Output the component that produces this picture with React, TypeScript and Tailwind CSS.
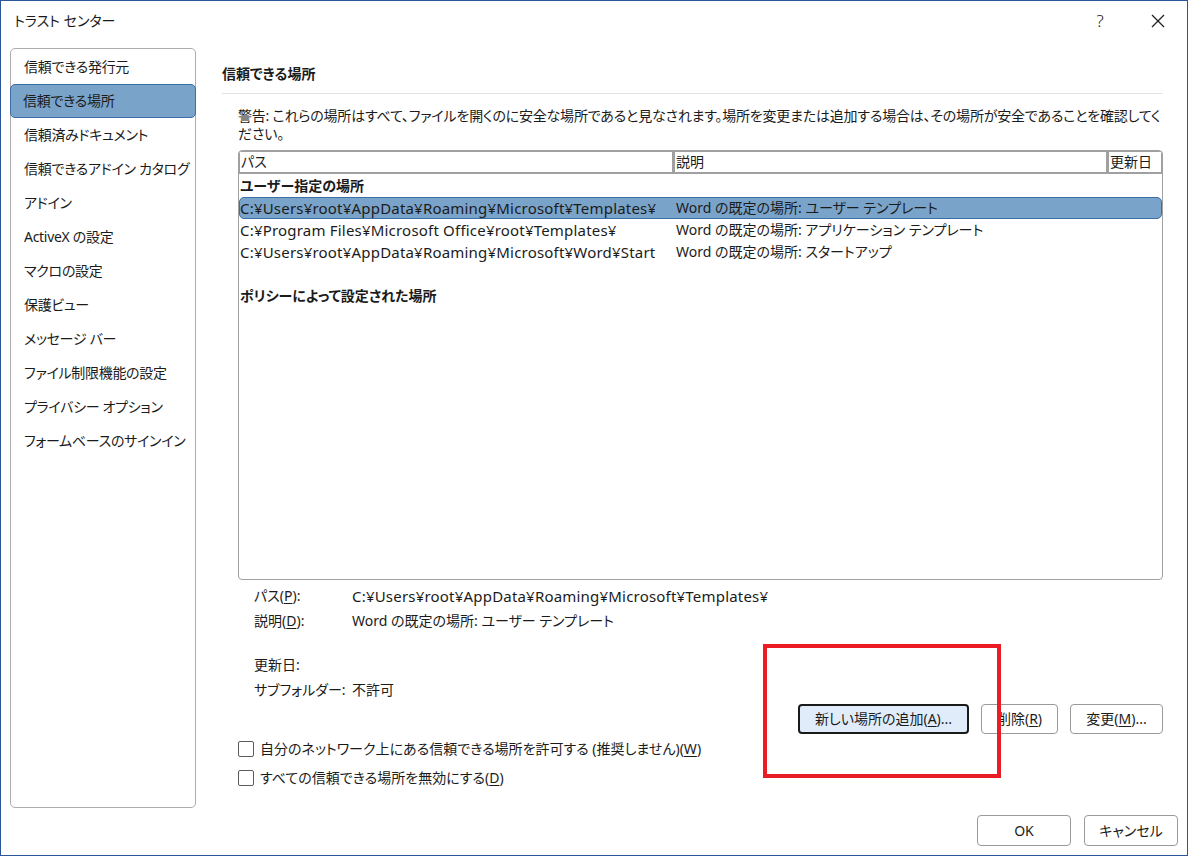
import React from "react";

const navItems = [
  "信頼できる発行元",
  "信頼できる場所",
  "信頼済みドキュメント",
  "信頼できるアドイン カタログ",
  "アドイン",
  "ActiveX の設定",
  "マクロの設定",
  "保護ビュー",
  "メッセージ バー",
  "ファイル制限機能の設定",
  "プライバシー オプション",
  "フォームベースのサインイン",
];

type Row = { kind: "group" | "item" | "blank"; path?: string; desc?: string; selected?: boolean };

const rows: Row[] = [
  { kind: "group", path: "ユーザー指定の場所" },
  {
    kind: "item",
    path: "C:¥Users¥root¥AppData¥Roaming¥Microsoft¥Templates¥",
    desc: "Word の既定の場所: ユーザー テンプレート",
    selected: true,
  },
  {
    kind: "item",
    path: "C:¥Program Files¥Microsoft Office¥root¥Templates¥",
    desc: "Word の既定の場所: アプリケーション テンプレート",
  },
  {
    kind: "item",
    path: "C:¥Users¥root¥AppData¥Roaming¥Microsoft¥Word¥Start",
    desc: "Word の既定の場所: スタートアップ",
  },
  { kind: "blank" },
  { kind: "group", path: "ポリシーによって設定された場所" },
];

const U = ({ children }: { children: React.ReactNode }) => (
  <span className="underline underline-offset-2">{children}</span>
);

const Checkbox = ({ children }: { children: React.ReactNode }) => (
  <label className="flex items-center gap-[6px] h-[29px] whitespace-nowrap">
    <span className="w-[16px] h-[16px] border border-[#5c5c5c] rounded-[2px] bg-white" />
    <span>{children}</span>
  </label>
);

export default function App() {
  return (
    <div
      className="relative w-[1188px] h-[856px] bg-white border border-[#2b579a] flex flex-col text-[14px] leading-[20px] text-[#1b1b1b] [font-feature-settings:'palt'] overflow-hidden"
      style={{ fontFamily: '"Noto Sans", "Noto Sans CJK JP", sans-serif' }}
    >
      {/* title bar */}
      <div className="h-[40px] flex items-center justify-between pl-[13px]">
        <span>トラスト センター</span>
        <div className="flex items-center h-full">
          <span className="w-[58px] text-center text-[17px] font-light">?</span>
          <span className="w-[58px] flex justify-center">
            <svg width="14" height="14" viewBox="0 0 14 14" stroke="#222" strokeWidth="1.2">
              <line x1="1" y1="1" x2="13" y2="13" />
              <line x1="13" y1="1" x2="1" y2="13" />
            </svg>
          </span>
        </div>
      </div>

      {/* body */}
      <div className="flex mt-[7px] pl-[9px] h-[760px]">
        <nav className="w-[186px] h-full border border-[#adadad] rounded-[5px] pt-px flex flex-col">
          {navItems.map((item) => {
            const active = item === "信頼できる場所";
            return (
              <div
                key={item}
                className={
                  active
                    ? "h-[34px] flex items-center pl-[12px] -mx-px bg-[#7aa3c9] border border-[#3b6ea6] rounded-[5px] whitespace-nowrap tracking-[-0.3px]"
                    : "h-[34px] flex items-center pl-[12px] border border-transparent whitespace-nowrap tracking-[-0.3px]"
                }
              >
                {item}
              </div>
            );
          })}
        </nav>

        <main className="ml-[26px] w-[941px] flex flex-col">
          <h2 className="mt-[16px] font-bold h-[20px]">信頼できる場所</h2>
          <div className="mt-[9px] h-px bg-[#e3e3e3]" />
          <p className="mt-[13px] ml-[16px] leading-[18px] whitespace-nowrap tracking-[-0.2px]">
            警告: これらの場所はすべて、ファイルを開くのに安全な場所であると見なされます。場所を変更または追加する場合は、その場所が安全であることを確認してく
            <br />
            ださい。
          </p>

          {/* table */}
          <div className="mt-[7px] ml-[16px] w-[925px] h-[430px] border border-[#a0a0a0] rounded-[4px] overflow-hidden flex flex-col">
            <div className="flex h-[23px] bg-[#a0a0a0] gap-[3px] pt-px pb-[2px] px-px">
              <div className="w-[432px] bg-white pl-px leading-[20px]">パス</div>
              <div className="w-[431px] bg-white pl-px leading-[20px]">説明</div>
              <div className="flex-1 bg-white pl-px leading-[20px] whitespace-nowrap">更新日</div>
            </div>
            <div className="flex flex-col pt-px">
              {rows.map((r, i) => {
                if (r.kind === "blank") return <div key={i} className="h-[22px]" />;
                if (r.kind === "group")
                  return (
                    <div key={i} className="h-[22px] flex items-center pl-px font-bold">
                      {r.path}
                    </div>
                  );
                return (
                  <div
                    key={i}
                    className={
                      r.selected
                        ? "h-[22px] flex items-center bg-[#7aa3c9] border border-[#3b6ea6] rounded-[5px]"
                        : "h-[22px] flex items-center border border-transparent"
                    }
                  >
                    <span className="w-[436px] whitespace-nowrap overflow-hidden text-[15px] tracking-[0.2px]">
                      {r.path}
                    </span>
                    <span className="whitespace-nowrap">{r.desc}</span>
                  </div>
                );
              })}
            </div>
          </div>

          {/* details */}
          <div className="mt-[3px] ml-[32px] flex flex-col whitespace-nowrap">
            <div className="h-[25px] flex items-center">
              <span className="w-[98px]">
                パス(<U>P</U>):
              </span>
              <span className="text-[15px] tracking-[0.2px]">
                C:¥Users¥root¥AppData¥Roaming¥Microsoft¥Templates¥
              </span>
            </div>
            <div className="h-[25px] flex items-center">
              <span className="w-[98px]">
                説明(<U>D</U>):
              </span>
              <span>Word の既定の場所: ユーザー テンプレート</span>
            </div>
            <div className="h-[25px] mt-[19px] flex items-center">
              <span className="w-[98px]">更新日:</span>
            </div>
            <div className="h-[25px] flex items-center">
              <span className="w-[98px]">サブフォルダー:</span>
              <span>不許可</span>
            </div>
          </div>

          <div className="mt-[2px] flex justify-end gap-[12px] whitespace-nowrap">
            <button className="w-[171px] h-[30px] bg-[#e0ecfa] border-2 border-[#1a1a1a] rounded-[4px]">
              新しい場所の追加(<U>A</U>)...
            </button>
            <button className="w-[77px] h-[30px] border border-[#9a9a9a] rounded-[4px]">
              削除(<U>R</U>)
            </button>
            <button className="w-[93px] h-[30px] border border-[#9a9a9a] rounded-[4px]">
              変更(<U>M</U>)...
            </button>
          </div>

          <div className="ml-[16px] flex flex-col">
            <Checkbox>
              自分のネットワーク上にある信頼できる場所を許可する (推奨しません)(<U>W</U>)
            </Checkbox>
            <Checkbox>
              すべての信頼できる場所を無効にする(<U>D</U>)
            </Checkbox>
          </div>
        </main>
      </div>

      {/* footer */}
      <div className="flex justify-end gap-[13px] pt-[7px] pr-[9px]">
        <button className="w-[94px] h-[31px] border border-[#9a9a9a] rounded-[4px]">OK</button>
        <button className="w-[94px] h-[31px] border border-[#9a9a9a] rounded-[4px]">キャンセル</button>
      </div>

      {/* annotation */}
      <div className="absolute left-[762px] top-[643px] w-[238px] h-[134px] border-[4px] border-[#ec1c24] pointer-events-none" />
    </div>
  );
}
